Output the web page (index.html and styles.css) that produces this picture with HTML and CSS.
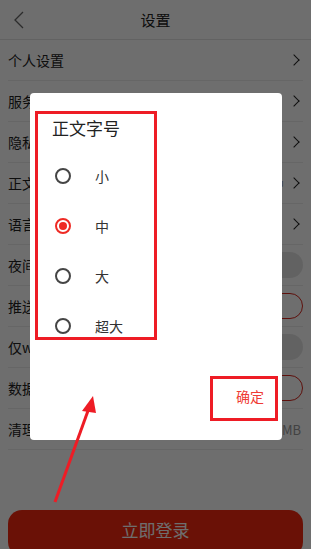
FILE: index.html
```html
<!DOCTYPE html>
<html lang="zh">
<head>
<meta charset="utf-8">
<link rel="stylesheet" href="styles.css">
</head>
<body>
<div class="page">
  <header class="topbar">
    <svg class="back" width="12" height="20" viewBox="0 0 12 20"><path d="M10 2 L2 10 L10 18" fill="none" stroke="#666" stroke-width="1.3"/></svg>
    <span class="title">设置</span>
  </header>
  <ul class="list">
    <li class="row"><span>个人设置</span><i class="chev"></i></li>
    <li class="row"><span>服务条款</span><i class="chev"></i></li>
    <li class="row"><span>隐私政策</span><i class="chev"></i></li>
    <li class="row"><span>正文字号</span><span class="right"><em class="val">中</em><i class="chev"></i></span></li>
    <li class="row"><span>语言设置</span><i class="chev"></i></li>
    <li class="row"><span>夜间模式</span><b class="toggle"></b></li>
    <li class="row"><span>推送通知</span><b class="toggle on"></b></li>
    <li class="row"><span>仅wifi下载图片</span><b class="toggle"></b></li>
    <li class="row"><span>数据统计</span><b class="toggle on"></b></li>
    <li class="row"><span>清理缓存</span><em class="val mb">3.26MB</em></li>
  </ul>
  <div class="login">立即登录</div>
</div>
<div class="mask"></div>
<div class="dialog">
  <div class="dtitle">正文字号</div>
  <div class="opts">
    <div class="opt"><i class="radio"></i><span>小</span></div>
    <div class="opt"><i class="radio sel"></i><span>中</span></div>
    <div class="opt"><i class="radio"></i><span>大</span></div>
    <div class="opt"><i class="radio"></i><span>超大</span></div>
  </div>
  <div class="ok">确定</div>
</div>
<div class="mark mark-opts"></div>
<div class="mark mark-ok"></div>
<svg class="arrow" width="311" height="549" viewBox="0 0 311 549">
  <line x1="55" y1="502" x2="89" y2="408" stroke="#ee1c25" stroke-width="3"/>
  <polygon points="93,396 82,411 96,413" fill="#ee1c25"/>
</svg>
</body>
</html>
```
FILE: styles.css
```css
html, body { margin: 0; padding: 0; }
body {
  width: 311px; height: 549px; overflow: hidden; position: relative;
  background: #fff;
  font-family: "Noto Sans CJK SC", "Noto Sans", sans-serif;
  color: #222;
}
.page { display: flex; flex-direction: column; height: 549px; }
.topbar {
  height: 40px; flex: none; display: flex; align-items: center; justify-content: center;
  position: relative; border-bottom: 1px solid #e3e3e3; box-sizing: border-box;
}
.back { position: absolute; left: 13px; top: 10px; }
.title { font-size: 15px; color: #222; }
.list { list-style: none; margin: 0; padding: 0 8px; }
.row {
  height: 41px; box-sizing: border-box; border-bottom: 1px solid #ececec;
  display: flex; align-items: center; justify-content: space-between;
  font-size: 14px; color: #222;
}
.right { display: flex; align-items: center; gap: 6px; }
.val { font-style: normal; color: #999; font-size: 13px; }
.mb { padding-right: 2px; }
.chev {
  width: 7px; height: 7px; border-right: 1.6px solid #222; border-top: 1.6px solid #222;
  transform: rotate(45deg); margin-right: 5px;
}
.toggle {
  width: 50px; height: 26px; border-radius: 13px; background: #e4e4e4;
  box-sizing: border-box; margin-right: 0;
}
.toggle.on { background: #fff; border: 1.6px solid #d9261c; }
.login {
  margin: 60px 8px 0; height: 46px; flex: none; border-radius: 14px;
  background: #f5290f; color: #fff; font-size: 17px;
  display: flex; align-items: center; justify-content: center; padding-bottom: 8px; box-sizing: border-box;
}
.mask { position: absolute; inset: 0; background: rgba(0,0,0,0.57); }
.dialog {
  position: absolute; left: 30px; top: 93px; width: 252px; height: 347px;
  background: #fff; border-radius: 4px; box-sizing: border-box;
  padding: 24px 0 0 22px;
}
.dtitle { font-size: 17px; color: #222; line-height: 22px; }
.opts { display: flex; flex-direction: column; margin-top: 12px; }
.opt { height: 50px; display: flex; align-items: center; font-size: 14px; color: #333; }
.opt span { margin-left: 24px; }
.radio {
  width: 16px; height: 16px; border: 2px solid #454545; border-radius: 50%;
  box-sizing: border-box; margin-left: 3px; display: flex; align-items: center; justify-content: center;
}
.radio.sel { border-color: #ee2a24; }
.radio.sel::after { content: ""; width: 8px; height: 8px; border-radius: 50%; background: #ee2a24; }
.ok {
  position: absolute; left: 184px; top: 293px; width: 72px; text-align: center;
  font-size: 14px; color: #ef3b34;
}
.mark { position: absolute; border: 3px solid #ee1c25; box-sizing: border-box; }
.mark-opts { left: 35px; top: 111px; width: 122px; height: 229px; }
.mark-ok { left: 210px; top: 376px; width: 68px; height: 45px; }
.arrow { position: absolute; left: 0; top: 0; }
```
